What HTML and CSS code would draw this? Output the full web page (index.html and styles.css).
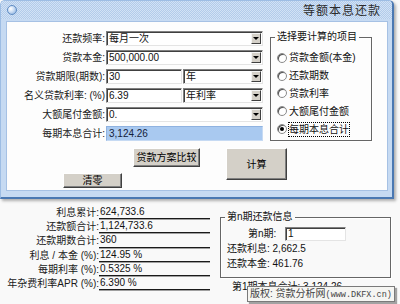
FILE: index.html
```html
<!DOCTYPE html>
<html lang="zh-CN">
<head>
<meta charset="utf-8">
<title>等额本息还款</title>
<link rel="stylesheet" href="styles.css">
</head>
<body>
<div class="window">
  <div class="titlebar">
    <span class="orb"></span>
    <span class="title">等额本息还款</span>
  </div>
  <div class="client">
    <div class="top">
      <div class="form">
        <div class="row"><span class="label">还款频率:</span><div class="field select wide"><span>每月一次</span><i class="arrow"></i></div></div>
        <div class="row"><span class="label">贷款本金:</span><div class="field select wide"><span>500,000.00</span><i class="arrow"></i></div></div>
        <div class="row"><span class="label">贷款期限(期数):</span><div class="field short">30</div><div class="field select unit"><span>年</span><i class="arrow"></i></div></div>
        <div class="row"><span class="label">名义贷款利率: (%)</span><div class="field short">6.39</div><div class="field select unit"><span>年利率</span><i class="arrow"></i></div></div>
        <div class="row"><span class="label">大额尾付金额:</span><div class="field select wide"><span>0.</span><i class="arrow"></i></div></div>
        <div class="row"><span class="label">每期本息合计:</span><div class="result">3,124.26</div></div>
      </div>
      <fieldset class="group choose">
        <legend>选择要计算的项目</legend>
        <div class="radio"><span class="dot"></span><span>贷款金额(本金)</span></div>
        <div class="radio"><span class="dot"></span><span>还款期数</span></div>
        <div class="radio"><span class="dot"></span><span>贷款利率</span></div>
        <div class="radio"><span class="dot"></span><span>大额尾付金额</span></div>
        <div class="radio"><span class="dot on"></span><span class="focus">每期本息合计</span></div>
      </fieldset>
    </div>
    <div class="buttons">
      <div class="btn clear">清零</div>
      <div class="btn compare">贷款方案比较</div>
      <div class="btn calc">计算</div>
    </div>
  </div>
</div>
<div class="lower">
  <div class="stats">
    <div class="srow"><span class="slabel">利息累计:</span><span class="sval">624,733.6</span></div>
    <div class="srow"><span class="slabel">还款额合计:</span><span class="sval">1,124,733.6</span></div>
    <div class="srow"><span class="slabel">还款期数合计:</span><span class="sval">360</span></div>
    <div class="srow"><span class="slabel">利息 / 本金 (%):</span><span class="sval">124.95 %</span></div>
    <div class="srow"><span class="slabel">每期利率 (%):</span><span class="sval">0.5325 %</span></div>
    <div class="srow"><span class="slabel">年杂费利率APR (%):</span><span class="sval">6.390 %</span></div>
  </div>
  <div class="period">
    <fieldset class="group nth">
      <legend>第n期还款信息</legend>
      <div class="nrow"><span class="nlabel">第n期:</span><div class="field ninput">1</div></div>
      <div class="info">还款利息: 2,662.5</div>
      <div class="info">还款本金: 461.76</div>
    </fieldset>
    <div class="total">第1期本息合计: 3,124.26</div>
  </div>
</div>
<div class="tooltip">版权: 贷款分析网<span class="url">(www.DKFX.cn)</span></div>
</body>
</html>
```
FILE: styles.css
```css
* { box-sizing: border-box; }
body {
  margin: 0;
  width: 400px;
  height: 304px;
  overflow: hidden;
  position: relative;
  background: #f9f9f9;
  font-family: "Liberation Sans", "Noto Sans CJK SC", sans-serif;
  font-size: 10px;
  line-height: 13px;
  color: #111;
}
.window {
  width: 394px;
  height: 199px;
  border: 1px solid #9dbde4;
  border-right: 2px solid #4a78b2;
  border-bottom: 2px solid #4a78b2;
  border-radius: 5px 5px 0 0;
  background: #c6daf2;
  padding: 0 4px 6px 5px;
  display: flex;
  flex-direction: column;
  box-shadow: 2px 2px 3px rgba(0, 0, 0, 0.3);
}
.titlebar {
  height: 18px;
  margin: 0 -4px 0 -5px;
  padding: 0 11px 0 6px;
  display: flex;
  align-items: center;
  justify-content: space-between;
  border-radius: 4px 4px 0 0;
  background: repeating-conic-gradient(#b2cbea 0 25%, #d2e2f5 0 50%) 0 0 / 2px 2px;
}
.orb {
  width: 10px;
  height: 10px;
  border-radius: 50%;
  border: 1px solid #5f8cc4;
  background: radial-gradient(circle at 35% 35%, #ffffff 0, #cfe0f5 40%, #7ea7d9 100%);
}
.title {
  font-family: "Noto Sans CJK SC", sans-serif;
  font-size: 12px;
  letter-spacing: 1px;
  color: #2b2b2b;
  line-height: 14px;
}
.client {
  margin-top: 2px;
  flex: 1;
  background: #fdfdfd;
  border: 1px solid #a6c1e4;
}
.top {
  display: flex;
  align-items: flex-start;
}
.form {
  width: 256px;
  padding-top: 9px;
}
.row {
  display: flex;
  align-items: center;
  height: 15px;
  margin-bottom: 4px;
}
.row:last-child { margin-bottom: 0; }
.label {
  width: 98px;
  margin-right: 1px;
  text-align: right;
  white-space: nowrap;
  color: #1a1a1a;
}
.field {
  height: 15px;
  display: flex;
  align-items: center;
  padding-left: 2px;
  background: #fff;
  border: 1px solid;
  border-color: #808080 #e4e4e4 #e4e4e4 #808080;
  box-shadow: inset 1px 1px 0 #404040;
  white-space: nowrap;
}
.wide { width: 157px; }
.short { width: 76px; margin-right: 1px; }
.unit { width: 80px; }
.select span { flex: 1; }
.arrow {
  width: 10px;
  height: 11px;
  margin-right: 1px;
  background: #d4d0c8;
  border: 1px solid;
  border-color: #f4f4f4 #404040 #404040 #f4f4f4;
  display: flex;
  align-items: center;
  justify-content: center;
}
.arrow::after {
  content: "";
  border-left: 3px solid transparent;
  border-right: 3px solid transparent;
  border-top: 3px solid #000;
}
.result {
  width: 157px;
  height: 15px;
  padding-left: 2px;
  display: flex;
  align-items: center;
  background: #a9c9f0;
  border: 1px solid #c6daf3;
  border-top-color: #8fb2e0;
  border-left-color: #8fb2e0;
  color: #14213a;
}
.group {
  margin: 0;
  border: 1px solid #666;
  box-shadow: inset 1px 1px 0 #fff, 1px 1px 0 #fff;
  min-width: 0;
}
.group legend {
  padding: 0 2px;
  margin-left: -2px;
  line-height: 12px;
  white-space: nowrap;
}
.choose {
  margin-left: 7px;
  margin-top: 9px;
  width: 102px;
  height: 110px;
  padding: 6px 0 0 6px;
}
.radio {
  display: flex;
  align-items: center;
  height: 17.8px;
  white-space: nowrap;
}
.dot {
  width: 10px;
  height: 10px;
  border-radius: 50%;
  border: 1px solid #8a8a8a;
  background: #fff;
  box-shadow: inset 1px 1px 0 #505050;
  margin-right: 2px;
  display: flex;
  align-items: center;
  justify-content: center;
  flex: none;
}
.dot.on::after {
  content: "";
  width: 4px;
  height: 4px;
  border-radius: 50%;
  background: #000;
}
.focus {
  outline: 1px dotted #000;
  outline-offset: 0;
}
.buttons {
  display: flex;
  align-items: flex-start;
  padding-top: 7px;
}
.btn {
  display: flex;
  align-items: center;
  justify-content: center;
  background: #d4d0c8;
  border: 1px solid;
  border-color: #ffffff #404040 #404040 #ffffff;
  box-shadow: inset -1px -1px 0 #808080;
  color: #000;
  white-space: nowrap;
}
.clear { margin-left: 56px; margin-top: 25px; width: 59px; height: 15px; }
.compare { margin-left: 11px; width: 67px; height: 19px; }
.calc { margin-left: 26px; width: 61px; height: 32px; }
.lower {
  display: flex;
  align-items: flex-start;
  padding-top: 7px;
}
.stats { width: 210px; }
.srow {
  display: flex;
  height: 14.2px;
}
.slabel {
  width: 99px;
  text-align: right;
  white-space: nowrap;
  color: #1a1a1a;
  line-height: 13.2px;
}
.sval {
  flex: 1;
  height: 13.2px;
  line-height: 12.2px;
  padding-left: 1px;
  border-bottom: 1px solid #1a1a1a;
  box-shadow: 0 1px 0 #a0a0a0;
  white-space: nowrap;
}
.period {
  margin-left: 10px;
  width: 171px;
}
.nth {
  margin-top: 5px;
  height: 67px;
  padding: 3px 0 0 6px;
}
.nrow {
  display: flex;
  align-items: center;
  height: 15px;
  padding-left: 21px;
}
.nlabel { width: 37px; white-space: nowrap; }
.ninput { width: 61px; height: 14px; }
.info {
  margin-top: 1px;
  line-height: 14px;
  white-space: nowrap;
}
.total {
  margin-top: 2px;
  padding-left: 12px;
  line-height: 13px;
  white-space: nowrap;
}
.tooltip {
  position: absolute;
  left: 247px;
  top: 286px;
  width: 148px;
  height: 16px;
  padding-left: 2px;
  background: #f5f5f2;
  border: 1px solid #7a7a7a;
  box-shadow: 2px 2px 1px rgba(0, 0, 0, 0.35);
  color: #444;
  line-height: 14px;
  white-space: nowrap;
}
.url {
  font-family: "Liberation Mono", monospace;
  font-size: 8.5px;
}
```
